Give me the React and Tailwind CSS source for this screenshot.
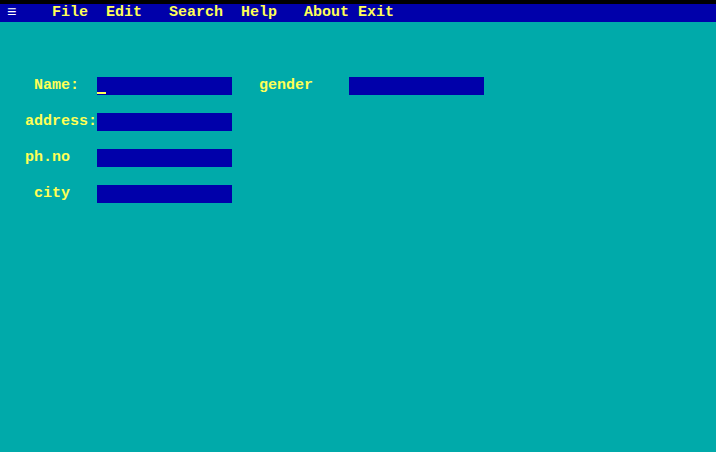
const menu = [
  { label: 'File', col: 6 },
  { label: 'Edit', col: 12 },
  { label: 'Search', col: 19 },
  { label: 'Help', col: 27 },
  { label: 'About', col: 34 },
  { label: 'Exit', col: 40 },
];

function Field({ cursor }) {
  return (
    <div className="relative w-[135px] h-[18px] bg-[#0000AA]">
      {cursor && <div className="absolute left-0 top-[15px] w-[9px] h-[2px] bg-[#FFFF55]" />}
    </div>
  );
}

export default function App() {
  return (
    <div
      className="w-[716px] h-[452px] overflow-hidden bg-[#00AAAA] text-[#FFFF55] font-bold text-[15px] leading-[18px]"
      style={{ fontFamily: '"Liberation Mono", "DejaVu Sans Mono", monospace' }}
    >
      <div className="h-[4px] bg-black" />
      <div className="h-[18px] bg-[#0000AA] flex ml-[-2px]">
        <span className="w-[54px] pl-[9px] text-white font-normal text-[16px]">≡</span>
        {menu.map((m, i) => {
          const next = menu[i + 1];
          const width = next ? (next.col - m.col) * 9 : m.label.length * 9;
          return (
            <span key={m.label} className="whitespace-pre" style={{ width }}>
              {m.label}
            </span>
          );
        })}
      </div>

      <div className="ml-[-2px] mt-[55px] flex flex-col gap-[18px]">
        <div className="flex h-[18px]">
          <span className="w-[99px] pl-[36px]">Name:</span>
          <Field cursor />
          <span className="w-[117px] pl-[27px]">gender</span>
          <Field />
        </div>
        <div className="flex h-[18px]">
          <span className="w-[99px] pl-[27px]">address:</span>
          <Field />
        </div>
        <div className="flex h-[18px]">
          <span className="w-[99px] pl-[27px]">ph.no</span>
          <Field />
        </div>
        <div className="flex h-[18px]">
          <span className="w-[99px] pl-[36px]">city</span>
          <Field />
        </div>
      </div>
    </div>
  );
}
